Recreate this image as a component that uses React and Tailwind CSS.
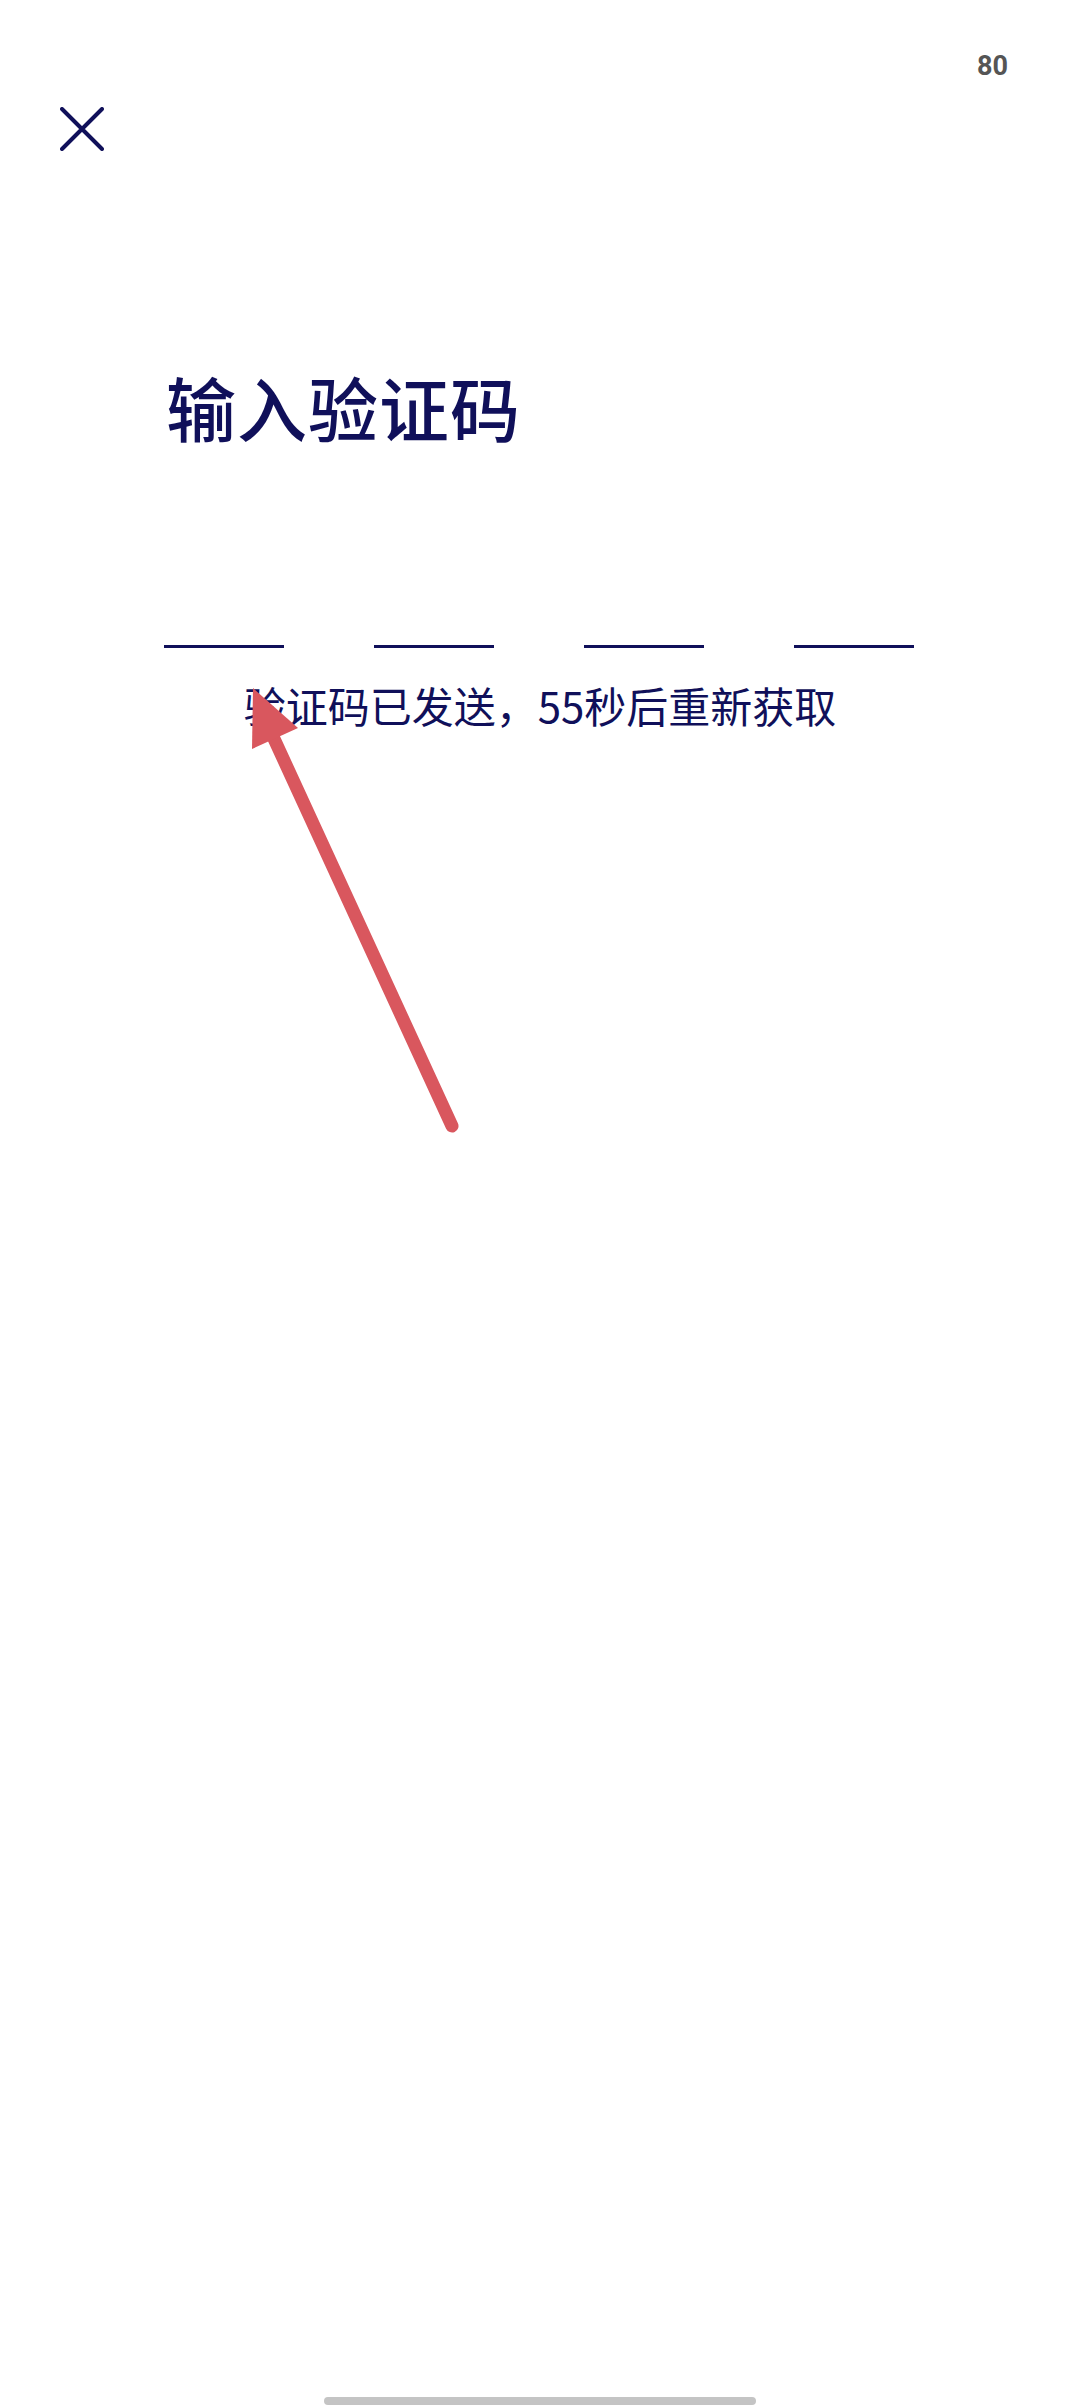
import React from 'react';

const navy = '#10105a';

// 关闭按钮
const CloseIcon = () => (
  <svg width="44" height="44" viewBox="0 0 44 44" fill="none">
    <path d="M2 2 L42 42 M42 2 L2 42" stroke={navy} strokeWidth="4" strokeLinecap="round" />
  </svg>
);

// 标注箭头（覆盖在内容上）
const Arrow = () => (
  <svg className="absolute left-0 top-0 pointer-events-none" width="1080" height="1200" viewBox="0 0 1080 1200">
    <line x1="452" y1="1126" x2="270" y2="730" stroke="#d9575e" strokeWidth="13" strokeLinecap="round" />
    <polygon points="253,688 252,749 298,728" fill="#d9575e" />
  </svg>
);

export default function App() {
  const slots = [0, 1, 2, 3];
  return (
    <div
      className="relative w-[1080px] h-[2408px] bg-white overflow-hidden flex flex-col"
      style={{ fontFamily: '"Noto Sans CJK SC", "Noto Sans", sans-serif' }}
    >
      {/* 状态栏 */}
      <div className="flex justify-end pr-[72px] pt-[48px]">
        <span className="text-[27px] leading-[36px] font-bold text-[#555555] font-['Roboto',sans-serif]">80</span>
      </div>

      {/* 关闭 */}
      <div className="pl-[60px] mt-[23px]">
        <CloseIcon />
      </div>

      {/* 标题 */}
      <h1 className="ml-[166px] mt-[221px] text-[70px] leading-[70px] font-medium text-[#10105a] tracking-[1px]">
        输入验证码
      </h1>

      {/* 验证码输入框 */}
      <div className="flex gap-[90px] pl-[164px] mt-[203px]">
        {slots.map((i) => (
          <div key={i} className="w-[120px] h-[3px] bg-[#10105a]" />
        ))}
      </div>

      <p className="mt-[36px] text-center text-[42px] leading-[42px] text-[#10105a]">
        验证码已发送，55秒后重新获取
      </p>

      {/* 底部手势条 */}
      <div className="mt-auto mb-[3px] flex justify-center">
        <div className="w-[432px] h-[8px] rounded-full bg-[#c4c4c4]" />
      </div>

      <Arrow />
    </div>
  );
}
